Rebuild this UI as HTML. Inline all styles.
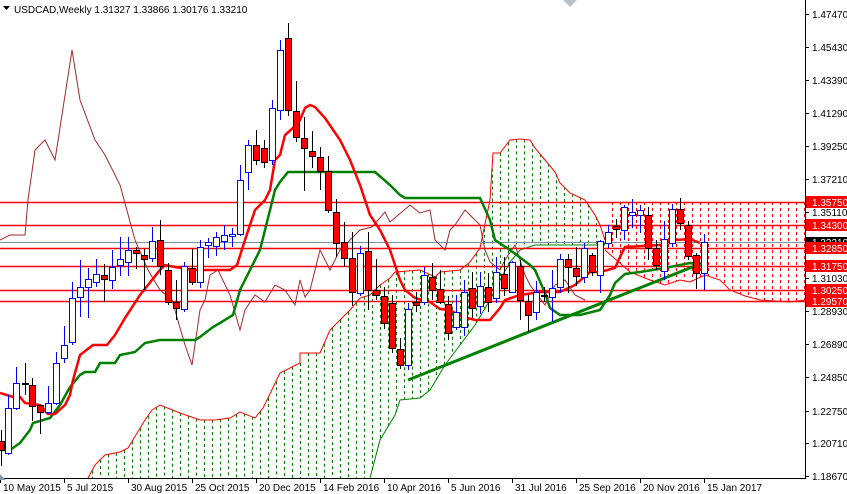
<!DOCTYPE html>
<html><head><meta charset="utf-8"><style>
html,body{margin:0;padding:0;background:#fff;width:847px;height:494px;overflow:hidden}
svg{display:block}
text{font-family:"Liberation Sans",sans-serif;font-size:10px}
</style></head><body>
<svg id="c" width="847" height="494" xmlns="http://www.w3.org/2000/svg">
<rect width="847" height="494" fill="#fff"/>
<g id="cloud"></g>
<g id="hl"></g>
<g id="lines"></g>
<g id="candles"></g>
<line x1="805.5" y1="0" x2="805.5" y2="478" stroke="#000"/>
<line x1="0" y1="478.5" x2="806" y2="478.5" stroke="#000"/>
<g id="axis"></g>
<polygon points="0,474 0,480 6,480" fill="#8a9aa8"/>
<polygon points="563,0 577,0 570,7" fill="#b8c0c8"/>
<polygon points="3,6 10,6 6.5,10" fill="#000"/>
<text x="14" y="13" font-size="11">USDCAD,Weekly  1.31327 1.33866 1.30176 1.33210</text>
</svg>
<script>
const NS="http://www.w3.org/2000/svg";
function el(p,t,a,txt){const e=document.createElementNS(NS,t);for(const k in a)e.setAttribute(k,a[k]);if(txt!==undefined)e.textContent=txt;document.getElementById(p).appendChild(e);return e;}
function interp(pts,x){for(let i=0;i<pts.length-1;i++){if(x>=pts[i][0]&&x<=pts[i+1][0]){const t=(x-pts[i][0])/((pts[i+1][0]-pts[i][0])||1);return pts[i][1]+t*(pts[i+1][1]-pts[i][1]);}}return null;}
const P=a=>a.map(p=>p.join(',')).join(' ');
// cloud green
const U=[[88,478],[95,465],[105,455],[120,452],[128,448],[145,420],[152,410],[160,405],[180,413],[200,420],[215,420],[230,418],[240,412],[255,418],[263,408],[268,398],[280,373],[300,363],[300,353],[320,353],[330,330],[340,320],[350,310],[360,298],[370,295],[380,285],[390,278],[395,272],[420,270],[435,277],[440,272],[460,270],[470,262],[480,248],[490,200],[493,153],[500,153],[510,140],[520,139],[530,140],[535,148],[545,160],[555,172],[560,183],[570,193],[585,200],[595,215],[600,225],[605,240]];
const L=[[88,478],[370,478],[380,440],[395,415],[400,400],[420,398],[430,390],[445,365],[460,345],[475,325],[490,300],[500,280],[510,262],[520,250],[535,245],[605,245]];
for(let x=92;x<=604;x+=8){const u=interp(U,x),l=interp(L,x);if(u!==null&&l!==null&&l-u>2)el('cloud','line',{x1:x+.5,y1:u,x2:x+.5,y2:Math.min(l,478),stroke:'#008000','stroke-dasharray':'3,3'});}
el('cloud','polyline',{points:P(U),fill:'none',stroke:'#ff0000','stroke-width':1});
el('cloud','polyline',{points:P(L.slice(1)),fill:'none',stroke:'#008000','stroke-width':1});
// red future cloud
const RL=[[605,250],[630,272],[650,280],[665,285],[680,280],[690,282],[705,275],[720,280],[730,290],[745,296],[760,300],[790,302],[805,300]];
for(let x=612;x<=804;x+=8){const l=interp(RL,x);el('cloud','line',{x1:x+.5,y1:202,x2:x+.5,y2:l,stroke:'#ff0000','stroke-dasharray':'3,3'});}
el('cloud','polyline',{points:P(RL),fill:'none',stroke:'#ff0000','stroke-width':1});
// horizontal lines
[202,225,248,266,290,301].forEach(y=>el('hl','line',{x1:0,y1:y+.5,x2:805,y2:y+.5,stroke:'#ff0000','stroke-width':1.5}));
el('hl','line',{x1:0,y1:242.5,x2:805,y2:242.5,stroke:'#7890a0'});
// chikou
const CH=[[0,240],[10,235],[25,235],[28,200],[35,150],[45,140],[55,160],[72,50],[80,100],[95,140],[105,155],[120,185],[135,240],[148,270],[160,290],[172,300],[185,345],[192,365],[200,310],[205,300],[210,275],[218,270],[230,295],[240,330],[245,310],[255,295],[265,302],[275,285],[285,290],[295,305],[300,280],[305,297],[310,290],[320,250],[330,270],[340,250],[350,240],[360,230],[372,227],[385,212],[390,222],[410,205],[420,213],[430,210],[435,240],[445,250],[450,230],[455,225],[465,210],[470,215],[480,225],[485,250],[490,262],[500,270],[505,260],[515,245],[525,275],[530,285],[545,305],[555,285],[565,280],[575,295],[585,300]];
el('lines','polyline',{points:P(CH),fill:'none',stroke:'#a52a2a','stroke-width':1});
const TK=[[0,393],[13,397],[20,397],[25,403],[40,405],[48,414],[55,414],[65,405],[70,395],[73,380],[80,355],[93,345],[107,345],[115,335],[125,318],[140,295],[160,270],[165,265],[175,267],[193,270],[230,270],[237,265],[245,240],[255,210],[265,200],[270,190],[275,160],[280,155],[285,135],[293,128],[300,120],[305,108],[310,105],[315,107],[325,118],[340,140],[350,160],[360,185],[370,215],[380,230],[390,250],[395,265],[400,280],[405,290],[415,298],[430,302],[440,309],[450,310],[460,316],[475,320],[490,320],[500,308],[505,300],[520,295],[540,292],[560,292],[575,285],[590,272],[600,272],[615,268],[620,257],[625,247],[660,245],[675,240],[690,239],[700,243]];
const KJ=[[0,450],[10,450],[20,443],[30,430],[33,423],[50,418],[60,405],[70,387],[80,375],[85,372],[95,372],[100,363],[115,363],[120,355],[135,352],[145,343],[160,340],[195,340],[200,337],[213,327],[220,323],[233,315],[240,290],[250,270],[260,250],[265,230],[270,210],[275,190],[280,182],[288,172],[375,172],[390,185],[400,195],[405,198],[480,198],[490,220],[495,240],[510,250],[530,265],[535,270],[545,293],[550,308],[560,315],[580,315],[600,310],[610,295],[615,283],[625,274],[640,272],[665,268],[690,263],[700,265]];
el('lines','polyline',{points:P(KJ),fill:'none',stroke:'#008000','stroke-width':2.5});
el('lines','polyline',{points:P(TK),fill:'none',stroke:'#ff0000','stroke-width':2.5});
el('lines','line',{x1:408,y1:380,x2:705,y2:262,stroke:'#008000','stroke-width':3});
// candles [x,open,close,high,low]
const C=[[1,441,450,430,466],[8,453,408,395,455],[16,408,383,367,410],[25,383,384,363,395],[32,385,406,378,421],[40,405,412,405,434],[48,412,403,386,414],[56,403,363,352,405],[64,358,345,326,363],[72,342,298,282,345],[80,297,287,260,317],[88,287,279,268,318],[96,282,274,259,287],[104,275,279,264,302],[112,280,267,250,289],[120,265,259,237,276],[128,262,250,237,276],[136,250,253,247,269],[144,255,259,249,290],[152,258,241,227,262],[160,240,266,220,275],[168,270,302,263,305],[176,302,308,280,320],[184,309,266,262,312],[192,268,282,249,285],[200,282,247,240,288],[208,245,242,238,258],[216,246,237,232,256],[224,241,235,225,250],[232,236,234,228,247],[240,234,180,165,236],[248,172,145,140,190],[256,145,160,130,165],[264,148,162,140,168],[272,160,108,100,165],[280,110,50,40,120],[288,38,110,23,116],[296,111,137,81,142],[304,138,148,117,191],[312,151,156,131,168],[320,157,171,147,190],[328,171,210,156,213],[336,212,243,199,257],[344,242,258,222,267],[352,258,292,232,306],[360,293,253,246,296],[368,251,290,232,310],[376,290,295,259,300],[384,296,323,287,329],[392,303,348,295,353],[400,349,365,338,369],[408,365,309,303,370],[416,302,305,292,312],[424,302,275,267,305],[432,277,290,263,300],[440,289,302,270,304],[448,304,333,296,340],[456,327,312,295,330],[464,327,292,280,336],[472,288,308,272,318],[480,306,286,272,314],[488,287,302,273,312],[496,298,272,257,303],[504,274,288,257,296],[512,292,262,261,292],[520,266,300,260,320],[528,301,315,295,332],[536,312,292,281,320],[544,295,296,287,302],[552,297,288,270,322],[560,287,259,254,293],[568,259,267,254,293],[576,268,276,247,286],[584,277,248,243,283],[592,255,272,253,276],[600,275,241,240,293],[608,243,232,225,248],[616,226,229,219,238],[624,230,207,205,240],[632,215,212,199,228],[640,215,210,205,233],[648,215,248,207,260],[656,248,265,240,270],[664,271,239,221,280],[672,243,209,204,247],[680,209,223,198,230],[688,225,256,221,260],[696,255,273,253,289],[704,273,242,234,290]];
C.forEach(([x,o,c,h,l])=>{const bull=c<o;const col=bull?'#0000ff':'#000';
el('candles','line',{x1:x+.5,y1:h,x2:x+.5,y2:l,stroke:col});
const t=Math.min(o,c),b=Math.max(o,c);
el('candles','rect',{x:x-2.5,y:t+.5,width:6,height:Math.max(b-t,1),fill:bull?'#fff':'#ff0000',stroke:col});});
// axis labels
const AX=[["1.47470",14],["1.45430",47],["1.43390",80],["1.41290",113],["1.39250",146],["1.37210",179],["1.35110",212],["1.31030",278],["1.28930",311],["1.26890",344],["1.24850",377],["1.22750",411],["1.20710",443],["1.18670",476]];
AX.forEach(([t,y])=>{el('axis','line',{x1:805,y1:y+.5,x2:809,y2:y+.5,stroke:'#000'});el('axis','text',{x:812,y:y+4},t);});
el('axis','rect',{x:806,y:237,width:41,height:12,fill:'#000'});
el('axis','text',{x:812,y:246,fill:'#fff'},"1.33210");
[["1.35750",202],["1.34300",225],["1.32850",248],["1.31750",266],["1.30250",290],["1.29570",301]].forEach(([t,y])=>{el('axis','rect',{x:806,y:y-6,width:41,height:12,fill:'#ff0000'});el('axis','text',{x:812,y:y+4,fill:'#fff'},t);});
const D=[["10 May 2015",0],["5 Jul 2015",64],["30 Aug 2015",128],["25 Oct 2015",192],["20 Dec 2015",256],["14 Feb 2016",320],["10 Apr 2016",384],["5 Jun 2016",448],["31 Jul 2016",512],["25 Sep 2016",576],["20 Nov 2016",640],["15 Jan 2017",704]];
D.forEach(([t,x])=>{el('axis','line',{x1:x+.5,y1:478,x2:x+.5,y2:483,stroke:'#000'});el('axis','text',{x:x+3,y:491},t);});
</script>
</body></html>
